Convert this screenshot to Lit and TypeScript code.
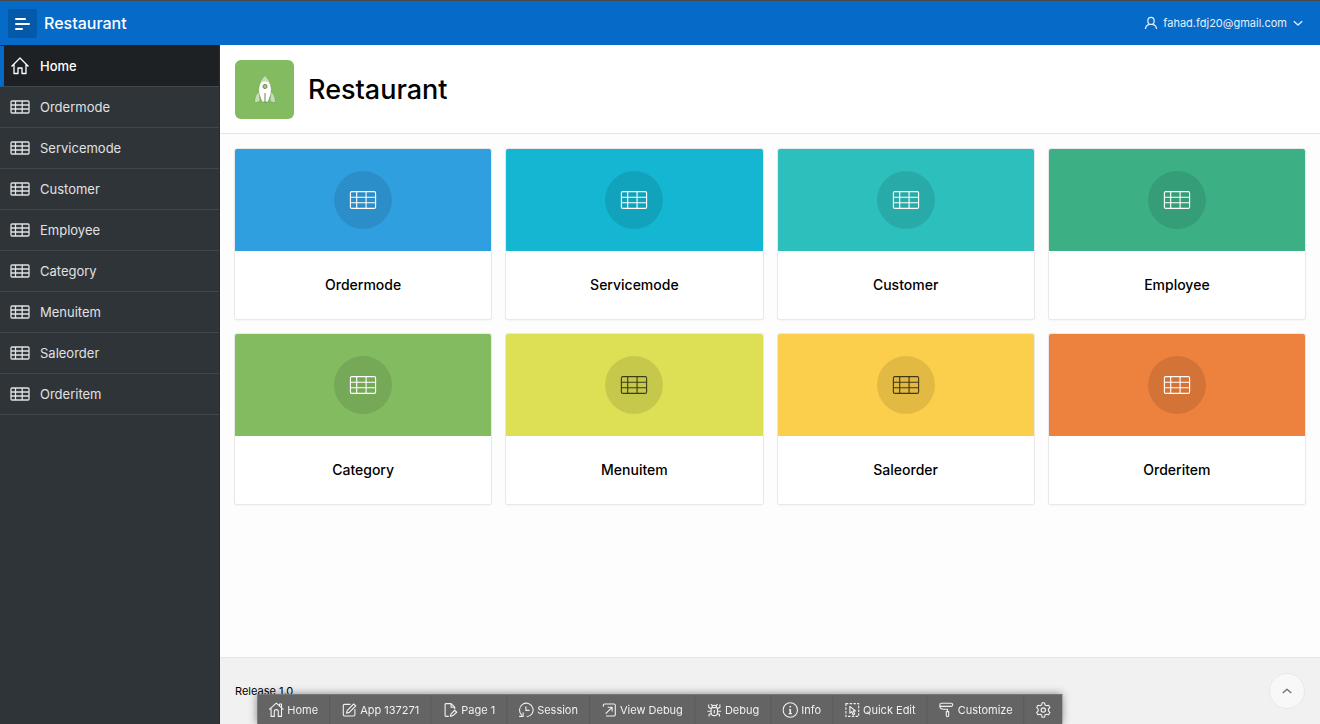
import { LitElement, html, css, svg } from "lit";
import { customElement } from "lit/decorators.js";
import { classMap } from "lit/directives/class-map.js";

const pages = [
  { name: "Ordermode", tone: "blue" },
  { name: "Servicemode", tone: "cyan" },
  { name: "Customer", tone: "teal" },
  { name: "Employee", tone: "jade" },
  { name: "Category", tone: "green" },
  { name: "Menuitem", tone: "lime" },
  { name: "Saleorder", tone: "yellow" },
  { name: "Orderitem", tone: "orange" },
];

const glyphs = {
  home: svg`<path d="M1.500 10.500 10 2l8.500 8.500M4 8.500V17.500H8V12H12V17.500H16V8.500"/>`,
  table: svg`<rect x="1" y="4" width="18" height="12" rx="1"/><path d="M1 8H19M1 12H19M5.500 4V16M12.200 4V16"/>`,
  devHome: svg`<path d="M1 9.500 10 1.500l9 8M3.500 8V18H7.500V12Q7.500 9.500 10 9.500T12.500 12V18H16.500V8M14 5V2.500H16.500V7.300"/>`,
  edit: svg`<path d="M11.500 3H4Q2.500 3 2.500 4.500V16Q2.500 17.500 4 17.500H15.500Q17 17.500 17 16V9M6.500 14 7.500 10.500 15.500 2.500 18 5 10 13Z"/>`,
  page: svg`<path d="M8 18H4.500Q3.500 18 3.500 17V3Q3.500 2 4.500 2H11L15.500 6.500V9M11 2V6.500H15.500M10 17.800 11 14.800 15.500 10.300 18 12.800 13.200 17Z"/>`,
  session: svg`<path d="M4.500 16.500A8.500 8.500 0 1 1 10.500 18.500M9.500 5.500V10.500H14M1 18H6V13"/>`,
  view: svg`<path d="M2.500 6V4Q2.500 2.500 4 2.500H16Q17.500 2.500 17.500 4V16Q17.500 17.500 16 17.500H6M5.500 14.500 13 7M8 6.500H13.500V12"/>`,
  bug: svg`<path d="M6 9Q6 7 8 7H12Q14 7 14 9V13Q14 17 10 17T6 13ZM7 7Q7 4 10 4T13 7M10 10V14M6 8.500 3 6.500V3M14 8.500 17 6.500V3M1.500 11.500H6M14 11.500H18.500M6.500 14 3.500 15.500V18M13.500 14 16.500 15.500V18M7.500 4.500 6 2.500M12.500 4.500 14 2.500"/>`,
  info: svg`<circle cx="10" cy="10" r="9"/><path stroke-width="2" d="M10 5V7M10 9V14.500"/><path d="M8.500 9.500H10M8 14.500H12"/>`,
  quick: svg`<path stroke-dasharray="3 1.700" d="M2 2H18V18H2Z"/><path d="M7 5.500V14L9.300 12 11 16 13 15 11.200 11.300H14Z"/>`,
  roller: svg`<path d="M4 1.500H16Q18 1.500 18 3.500T16 5.500H4Q2 5.500 2 3.500T4 1.500ZM2 3.500Q1 9 7 9H11.500V12M10 12H13V17Q13 18.500 11.500 18.500T10 17Z"/>`,
  gear: svg`<circle cx="10" cy="10" r="2.700"/><path d="M8.500 1H11.500L12.200 3.800 13.800 4.700 16.600 4 18.300 6.800 16.400 9V11L18.300 13.200 16.600 16 13.800 15.300 12.200 16.200 11.500 19H8.500L7.800 16.200 6.200 15.300 3.400 16 1.700 13.200 3.600 11V9L1.700 6.800 3.400 4 6.200 4.700 7.800 3.800Z"/>`,
  user: svg`<path d="M10 2Q14.500 2 14.500 7T10 12T5.500 7T10 2ZM2 18.500Q2.500 13 8 12M18 18.500Q17.500 13 12 12"/>`,
  down: svg`<path d="M3 7 10 13.500 17 7"/>`,
  up: svg`<path d="M3 13.500 10 7 17 13.500"/>`,
};

type Glyph = keyof typeof glyphs;

const icon = (name: Glyph, size = "") => html`
  <svg class="icon ${size}" viewBox="0 0 20 20" aria-hidden="true">${glyphs[name]}</svg>
`;

const devTools: { label: string; glyph: Glyph }[] = [
  { label: "Home", glyph: "devHome" },
  { label: "App 137271", glyph: "edit" },
  { label: "Page 1", glyph: "page" },
  { label: "Session", glyph: "session" },
  { label: "View Debug", glyph: "view" },
  { label: "Debug", glyph: "bug" },
  { label: "Info", glyph: "info" },
  { label: "Quick Edit", glyph: "quick" },
  { label: "Customize", glyph: "roller" },
];

@customElement("app-root")
export class AppRoot extends LitElement {
  static styles = css`
    :host {
      display: flex;
      flex-direction: column;
      min-height: 100vh;
      font-family: Inter, "Liberation Sans", sans-serif;
      font-size: 13px;
      line-height: 20px;
      color: #000;
    }
    * { box-sizing: border-box; }
    a { color: inherit; text-decoration: none; }
    button {
      margin: 0;
      padding: 0;
      border: 0;
      background: none;
      color: inherit;
      font: inherit;
      cursor: pointer;
    }
    h1, h2, ul { margin: 0; padding: 0; }
    h1, h2 { font-weight: 500; }
    ul { list-style: none; }
    .icon {
      flex: none;
      width: 20px;
      height: 20px;
      fill: none;
      stroke: currentColor;
      stroke-width: 1.3;
      stroke-linejoin: round;
    }
    .small { width: 14px; height: 14px; stroke-width: 1.8; }
    .tiny { width: 12px; height: 12px; stroke-width: 2.2; }
    .dev { width: 16px; height: 16px; stroke-width: 1.4; }
    .topbar {
      display: flex;
      align-items: center;
      height: 45px;
      padding: 0 16px 0 8px;
      border-top: 1px solid #47494b;
      background: #056ac8;
      color: #fff;
    }
    .toggle {
      display: grid;
      place-items: center;
      width: 29px;
      height: 29px;
      border-radius: 2px;
      background: #0559a9;
    }
    .menu { width: 15px; height: 15px; fill: #fff; }
    .brand { margin-left: 7px; font-size: 16px; font-weight: 500; }
    .account {
      display: flex;
      align-items: center;
      gap: 5px;
      margin-left: auto;
      font-size: 11px;
      color: #e6f0fa;
    }
    .body { display: flex; flex: 1; }
    .sidebar {
      flex: none;
      width: 220px;
      border-right: 1px solid #292d31;
      background: #2f3439;
      color: #e0e1e2;
    }
    .nav { border-top: 1px solid #1d2123; }
    .nav-link {
      display: flex;
      align-items: center;
      gap: 10px;
      height: 41px;
      padding-left: 10px;
      border-bottom: 1px solid #42474c;
    }
    .current {
      padding-left: 6px;
      border-left: 4px solid #056ac8;
      background: #1d2123;
      color: #fff;
      font-weight: 500;
    }
    .main {
      display: flex;
      flex: 1;
      flex-direction: column;
      min-width: 0;
      background: #fdfdfd;
    }
    .hero {
      display: flex;
      align-items: center;
      gap: 14px;
      padding: 15px 15px 14px;
      border-bottom: 1px solid #e6e6e6;
      background: #fff;
    }
    .logo {
      display: grid;
      place-items: center;
      width: 59px;
      height: 59px;
      border-radius: 6px;
      background: #83bb61;
    }
    .rocket { width: 30px; height: 30px; }
    .title { font-size: 27px; line-height: 36px; }
    .cards {
      display: grid;
      flex: 1;
      grid-template-columns: repeat(auto-fill, minmax(240px, 1fr));
      align-content: start;
      gap: 15px;
      padding: 15px;
    }
    .card {
      display: block;
      overflow: hidden;
      border-radius: 2px;
      background: #fff;
      box-shadow: 0 0 0 1px #e9e9e9, 0 1px 3px rgba(0, 0, 0, 0.08);
      text-align: center;
    }
    .cover {
      display: grid;
      place-items: center;
      height: 102px;
      color: #fff;
    }
    .disc {
      display: grid;
      place-items: center;
      width: 58px;
      height: 58px;
      border-radius: 50%;
      background: rgba(0, 0, 0, 0.1);
    }
    .large { width: 28px; height: 28px; stroke-width: 0.8; }
    .name { padding: 24px 10px; font-size: 14px; }
    .blue { background: #309fdf; }
    .cyan { background: #14b6d2; }
    .teal { background: #2dbfbc; }
    .jade { background: #3caf85; }
    .green { background: #83bb61; }
    .lime { background: #dddf55; color: #3d3e18; }
    .yellow { background: #fbcf4b; color: #443814; }
    .orange { background: #ed813e; }
    .footer {
      display: flex;
      align-items: center;
      justify-content: space-between;
      height: 67px;
      padding: 0 15px;
      border-top: 1px solid #e6e6e6;
      background: #f1f1f1;
      font-size: 11px;
    }
    .to-top {
      display: grid;
      place-items: center;
      width: 36px;
      height: 36px;
      border: 1px solid #e8e8e8;
      border-radius: 50%;
      background: #f8f8f8;
      color: #707070;
    }
    .devbar {
      position: fixed;
      bottom: 0;
      left: 50%;
      display: flex;
      height: 30px;
      transform: translateX(-50%);
      border-top: 1px solid #777;
      background: #646464;
      box-shadow: 0 0 8px rgba(0, 0, 0, 0.45);
      color: #f0f0f0;
      font-size: 11px;
      white-space: nowrap;
    }
    .tool {
      display: flex;
      align-items: center;
      gap: 3px;
      padding: 0 11px;
      border-right: 1px solid #5a5a5a;
    }
    .tool:last-child { border-right: 0; }
  `;

  render() {
    return html`
      <header class="topbar">
        <button class="toggle" aria-label="Toggle navigation">
          <svg class="menu" viewBox="0 0 15 15" aria-hidden="true">
            <rect x="0" y="2" width="11" height="2" rx="1" />
            <rect x="0" y="7" width="15" height="2" rx="1" />
            <rect x="0" y="12" width="8" height="2" rx="1" />
          </svg>
        </button>
        <a class="brand" href="#home">Restaurant</a>
        <button class="account">
          ${icon("user", "small")}<span>fahad.fdj20@gmail.com</span>${icon("down", "tiny")}
        </button>
      </header>
      <div class="body">
        <nav class="sidebar" aria-label="Main">
          <ul class="nav">
            ${["Home", ...pages.map((p) => p.name)].map((name, i) => html`
              <li>
                <a class=${classMap({ "nav-link": true, current: i === 0 })} href="#${name.toLowerCase()}">
                  ${icon(i === 0 ? "home" : "table")}<span>${name}</span>
                </a>
              </li>
            `)}
          </ul>
        </nav>
        <div class="main">
          <div class="hero">
            <span class="logo">
              <svg class="rocket" viewBox="0 0 30 30" aria-hidden="true">
                <path d="M9.500 16Q4.500 19 4.500 28L10 26.500ZM20.500 16Q25.500 19 25.500 28L20 26.500Z" fill="#c5dfb5" stroke="#6a9b4d" stroke-width=".6" />
                <path d="M15 1Q7 9 9 19L12 27H18L21 19Q23 9 15 1Z" fill="#fff" stroke="#6a9b4d" stroke-width=".6" />
                <path d="M15 1Q12 4 10.500 7.500Q15 5.500 19.500 7.500Q18 4 15 1Z" fill="#c5dfb5" />
                <circle cx="15" cy="11.500" r="2" fill="#a5cd8d" stroke="#62874c" />
                <path d="M15 18V28" stroke="#62874c" stroke-width="1" />
              </svg>
            </span>
            <h1 class="title">Restaurant</h1>
          </div>
          <main class="cards">
            ${pages.map((p) => html`
              <a class="card" href="#${p.name.toLowerCase()}">
                <div class="cover ${p.tone}"><span class="disc">${icon("table", "large")}</span></div>
                <h2 class="name">${p.name}</h2>
              </a>
            `)}
          </main>
          <footer class="footer">
            <span>Release 1.0</span>
            <button class="to-top" aria-label="Back to top">${icon("up", "tiny")}</button>
          </footer>
        </div>
      </div>
      <div class="devbar" role="toolbar" aria-label="Developer toolbar">
        ${devTools.map((t) => html`
          <button class="tool">${icon(t.glyph, "dev")}<span>${t.label}</span></button>
        `)}
        <button class="tool" aria-label="Settings">${icon("gear", "dev")}</button>
      </div>
    `;
  }
}
